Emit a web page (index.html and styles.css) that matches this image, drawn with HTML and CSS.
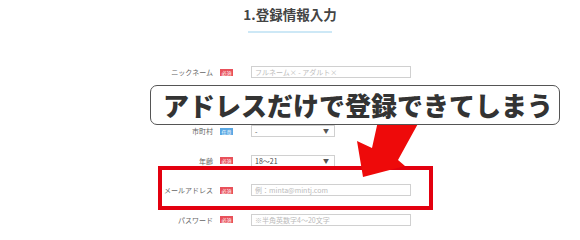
FILE: index.html
```html
<!DOCTYPE html>
<html lang="ja">
<head>
<meta charset="utf-8">
<title>1.登録情報入力</title>
<link rel="stylesheet" href="styles.css">
</head>
<body>
<main class="page">
  <h1 class="title">1.登録情報入力</h1>
  <div class="title-line"></div>
  <div class="form">
    <div class="row">
      <span class="label">ニックネーム</span>
      <span class="badge req">必須</span>
      <div class="field wide">フルネーム× - アダルト×</div>
    </div>
    <div class="row row-hidden"></div>
    <div class="row">
      <span class="label">市町村</span>
      <span class="badge opt">任意</span>
      <div class="field select"><span class="value">-</span><span class="caret">▼</span></div>
    </div>
    <div class="row">
      <span class="label">年齢</span>
      <span class="badge req">必須</span>
      <div class="field select"><span class="value">18～21</span><span class="caret">▼</span></div>
    </div>
    <div class="row">
      <span class="label">メールアドレス</span>
      <span class="badge req">必須</span>
      <div class="field wide">例：minta@mintj.com</div>
    </div>
    <div class="row">
      <span class="label">パスワード</span>
      <span class="badge req">必須</span>
      <div class="field wide">※半角英数字4～20文字</div>
    </div>
  </div>
</main>

<div class="highlight"></div>
<svg class="arrow" width="580" height="239" viewBox="0 0 580 239">
  <polygon points="380,112 420,120 398,160 405,166 363,177 357,141 372,148" fill="#ee0a0a"/>
</svg>
<div class="callout">アドレスだけで登録できてしまう</div>
</body>
</html>
```

FILE: styles.css
```css
html, body {
  margin: 0;
  padding: 0;
  background: #ffffff;
}

body {
  width: 580px;
  height: 239px;
  overflow: hidden;
  position: relative;
  font-family: "Noto Sans CJK JP", "Noto Sans", sans-serif;
}

.page {
  display: flex;
  flex-direction: column;
  align-items: center;
}

.title {
  margin: 0;
  padding-top: 6px;
  font-size: 13.5px;
  line-height: 16px;
  font-weight: 700;
  color: #444444;
}

.title-line {
  margin-top: 9px;
  width: 84px;
  height: 2px;
  background: #cde8f6;
}

.form {
  margin-top: 33px;
  width: 580px;
  display: flex;
  flex-direction: column;
  gap: 17.5px;
}

.row {
  height: 12px;
  display: flex;
  align-items: center;
}

.label {
  width: 215px;
  text-align: right;
  font-size: 7px;
  line-height: 12px;
  color: #666666;
  padding-right: 2px;
  box-sizing: border-box;
}

.badge {
  width: 13px;
  height: 7px;
  margin-left: 5px;
  font-size: 5px;
  line-height: 7px;
  color: #ffffff;
  text-align: center;
  overflow: hidden;
}

.badge.req { background: #e8505a; }
.badge.opt { background: #5aa8e4; }

.field {
  margin-left: 18px;
  height: 12px;
  box-sizing: border-box;
  border: 1px solid #d0d0d0;
  font-size: 7px;
  line-height: 10px;
  padding: 0 3px;
  color: #bbbbbb;
  white-space: nowrap;
}

.field.wide { width: 160px; }

.field.select {
  width: 84px;
  color: #444444;
  display: flex;
  justify-content: space-between;
}

.caret {
  font-size: 6px;
  color: #555555;
  padding-right: 2px;
}

.highlight {
  position: absolute;
  left: 158px;
  top: 166px;
  width: 275px;
  height: 44px;
  box-sizing: border-box;
  border: 4px solid #e3000f;
}

.arrow {
  position: absolute;
  left: 0;
  top: 0;
}

.callout {
  position: absolute;
  left: 150px;
  top: 85px;
  width: 410px;
  height: 40px;
  box-sizing: border-box;
  border: 1.5px solid #555555;
  border-radius: 7px;
  background: #ffffff;
  padding-left: 12px;
  font-size: 26px;
  line-height: 37px;
  font-weight: 900;
  color: #333333;
  white-space: nowrap;
}
```
